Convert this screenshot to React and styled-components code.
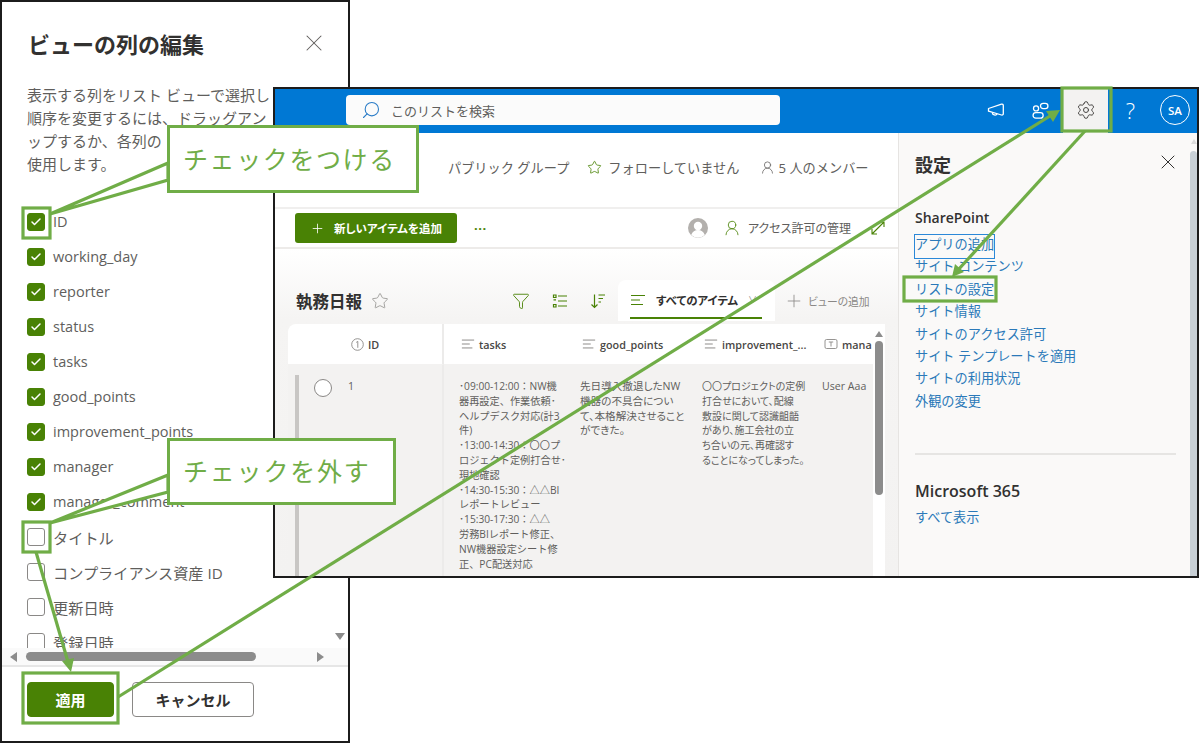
import React from "react";
import styled, { createGlobalStyle } from "styled-components";
import { Check, Funnel, Plus, Search, Settings, Star, UserRound, X } from "lucide-react";

const GREEN = "#70ad47";
const BRAND = "#498205";
const FONT = `"Open Sans", "Noto Sans CJK JP", sans-serif`;

const GlobalStyle = createGlobalStyle`
  html, body {
    margin: 0;
    padding: 0;
    background: #fff;
  }
  * {
    box-sizing: border-box;
  }
`;

const Stage = styled.div`
  position: relative;
  width: 1200px;
  height: 743px;
  overflow: hidden;
  background: #fff;
  font-family: ${FONT};
`;

/* left dialog */
const Dialog = styled.section`
  position: absolute;
  left: 0;
  top: 0;
  width: 350px;
  height: 743px;
  border: 2px solid #1c1c1c;
  background: #fff;
  display: flex;
  flex-direction: column;
  overflow: hidden;
`;
const DialogHead = styled.div`
  display: flex;
  align-items: center;
  justify-content: space-between;
  height: 30px;
  margin: 26px 20px 0 26px;
`;
const DialogTitle = styled.h1`
  margin: 0;
  font-size: 22px;
  font-weight: 700;
  color: #323130;
`;
const Desc = styled.div`
  margin: 26px 0 28px 25px;
  font-size: 15px;
  line-height: 23px;
  color: #605e5c;
  white-space: nowrap;
`;
const ColumnList = styled.div`
  flex: 1;
  min-height: 0;
  overflow: hidden;
  padding-left: 25px;
  position: relative;
`;
const ColumnRow = styled.div`
  display: flex;
  align-items: center;
  gap: 8px;
  height: 35px;
  font-size: ${(props) => (props.$cjk ? 15.2 : 14.5)}px;
  color: #605e5c;
`;
const CheckBox = styled.span`
  width: 18px;
  height: 18px;
  border-radius: 3px;
  display: flex;
  align-items: center;
  justify-content: center;
  flex: none;
  background: ${(props) => (props.$on ? BRAND : "#fff")};
  border: 1px solid ${(props) => (props.$on ? BRAND : "#8a8886")};
  color: #fff;
`;
const ScrollDown = styled.span`
  position: absolute;
  right: 3px;
  bottom: 8px;
  width: 0;
  height: 0;
  border-left: 5px solid transparent;
  border-right: 5px solid transparent;
  border-top: 7px solid #8c8c8c;
`;
const HScroll = styled.div`
  height: 17px;
  display: flex;
  align-items: center;
  padding: 0 24px 0 8px;
  background: #fafafa;
`;
const ArrowSide = styled.span`
  width: 0;
  height: 0;
  border-top: 5px solid transparent;
  border-bottom: 5px solid transparent;
  ${(props) =>
    props.$right
      ? `border-left: 7px solid #8c8c8c; margin-left: auto;`
      : `border-right: 7px solid #8c8c8c;`}
`;
const HThumb = styled.span`
  width: 230px;
  height: 9px;
  margin-left: 9px;
  border-radius: 5px;
  background: #8c8c8c;
`;
const DialogFoot = styled.div`
  height: 76px;
  border-top: 2px solid #e6e6e6;
  padding: 15px 0 0 25px;
  display: flex;
  align-items: flex-start;
  gap: 18px;
`;
const FootButton = styled.button`
  height: 35px;
  width: ${(props) => (props.$primary ? "87px" : "122px")};
  border-radius: 4px;
  font-family: ${FONT};
  font-size: 15px;
  font-weight: 700;
  padding: 0;
  background: ${(props) => (props.$primary ? BRAND : "#fff")};
  color: ${(props) => (props.$primary ? "#fff" : "#323130")};
  border: 1px solid ${(props) => (props.$primary ? BRAND : "#8a8886")};
`;

/* SharePoint window */
const ListWindow = styled.section`
  position: absolute;
  left: 273px;
  top: 87px;
  width: 926px;
  height: 491px;
  border: 2px solid #1c1c1c;
  background: #fff;
  display: flex;
  flex-direction: column;
  overflow: hidden;
`;
const SuiteBar = styled.header`
  flex: none;
  height: 44px;
  background: #0078d4;
  display: flex;
  align-items: center;
`;
const SearchBox = styled.div`
  width: 434px;
  height: 30px;
  margin: 0 0 2px 71px;
  border-radius: 4px;
  background: #fbfbfb;
  display: flex;
  align-items: center;
  gap: 10px;
  padding-left: 15px;
  font-size: 13px;
  color: #605e5c;
`;
const FlipSearch = styled(Search)`
  transform: scaleX(-1);
  color: #2a7cc7;
`;
const SuiteIcons = styled.div`
  margin-left: auto;
  display: flex;
  align-items: center;
`;
const SuiteButton = styled.div`
  width: ${(props) => (props.$narrow ? 44 : 45)}px;
  height: 44px;
  padding-bottom: 2px;
  display: flex;
  align-items: center;
  justify-content: center;
  color: ${(props) => (props.$active ? "#484644" : "#fff")};
  background: ${(props) => (props.$active ? "#f3f2f1" : "transparent")};
  font-size: 22px;
  font-weight: 300;
`;
const Avatar = styled.span`
  width: 30px;
  height: 30px;
  border: 1px solid #fff;
  border-radius: 50%;
  display: flex;
  align-items: center;
  justify-content: center;
  font-size: 11.5px;
  font-weight: 600;
  color: #fff;
`;
const WindowBody = styled.div`
  flex: 1;
  min-height: 0;
  display: flex;
`;
const Main = styled.div`
  width: 623px;
  flex: none;
  display: flex;
  flex-direction: column;
  overflow: hidden;
`;
const SiteBar = styled.div`
  flex: none;
  height: 75px;
  display: flex;
  align-items: center;
  padding: 0 0 0 173px;
  margin-top: -3px;
  font-size: 13.2px;
  color: #605e5c;
  white-space: nowrap;
`;
const SiteItem = styled.span`
  display: flex;
  align-items: center;
  gap: ${(props) => props.$gap || 5}px;
  margin-left: ${(props) => props.$left || 0}px;
`;
const GreenStar = styled(Star)`
  color: ${BRAND};
`;
const CommandBar = styled.div`
  flex: none;
  height: 42px;
  margin-top: 2px;
  border-top: 2px solid #f0efee;
  border-bottom: 2px solid #edebe9;
  display: flex;
  align-items: center;
  padding-left: 20px;
  white-space: nowrap;
`;
const NewButton = styled.div`
  width: 162px;
  height: 30px;
  border-radius: 3px;
  background: ${BRAND};
  color: #fff;
  display: flex;
  align-items: center;
  gap: 9px;
  padding-left: 15px;
  font-size: 11.5px;
  font-weight: 700;
  font-feature-settings: "palt";
`;
const MoreDots = styled.span`
  margin-left: 17px;
  color: ${BRAND};
  font-size: 13px;
  font-weight: 700;
  letter-spacing: 0.5px;
`;
const CommandRight = styled.div`
  margin-left: auto;
  display: flex;
  align-items: center;
  font-size: 12px;
  color: #605e5c;
`;
const ManageLabel = styled.span`
  display: flex;
  align-items: center;
  gap: 7px;
  margin: 0 19px 0 15px;
  color: #605e5c;
  font-feature-settings: "palt";
`;
const ShareIcon = styled.svg`
  width: 16px;
  height: 16px;
  margin-right: 12px;
  color: ${BRAND};
`;
const ListArea = styled.div`
  flex: 1;
  min-height: 0;
  background: linear-gradient(#ffffff, #f5f4f3 70px, #f3f2f1);
  padding-left: 13px;
  padding-right: 13px;
  display: flex;
  flex-direction: column;
`;
const ListHead = styled.div`
  flex: none;
  height: 41px;
  margin-top: 31px;
  display: flex;
  align-items: center;
  padding-left: 8px;
  white-space: nowrap;
`;
const ListTitle = styled.h2`
  margin: 0;
  font-size: 16.5px;
  font-weight: 700;
  color: #323130;
`;
const GrayStar = styled(Star)`
  color: #8a8886;
  margin-left: 9px;
`;
const ToolIcons = styled.div`
  margin-left: auto;
  display: flex;
  align-items: center;
  color: ${BRAND};
  gap: 22px;
  margin-right: 12px;
`;
const ViewTab = styled.div`
  position: relative;
  width: 157px;
  height: 41px;
  background: #fff;
  border-radius: 8px 8px 0 0;
  display: flex;
  align-items: center;
  gap: 10px;
  padding: 0 0 2px 12px;
  font-size: 11.4px;
  font-weight: 700;
  color: #323130;
  font-feature-settings: "palt";
  &::after {
    content: "";
    position: absolute;
    left: 12px;
    bottom: 2px;
    width: 132px;
    height: 2px;
    background: ${BRAND};
  }
`;
const TabChevron = styled.span`
  color: #8a8886;
  font-size: 9px;
  font-weight: 400;
`;
const AddView = styled.div`
  display: flex;
  align-items: center;
  gap: 4px;
  width: 110px;
  padding-left: 9px;
  font-size: 10.8px;
  color: #8a8886;
  font-feature-settings: "palt";
`;
const TableWrap = styled.div`
  flex: 1;
  min-height: 0;
  margin-top: 3px;
  display: flex;
`;
const Table = styled.div`
  width: 585px;
  flex: none;
  display: grid;
  grid-template-columns: 156px 121px 122px 120px 66px;
  grid-template-rows: 41px 1fr;
  border-radius: 8px 0 0 0;
  overflow: hidden;
`;
const HeadCell = styled.div`
  background: #fff;
  display: flex;
  align-items: center;
  justify-content: ${(props) => (props.$center ? "center" : "flex-start")};
  gap: 4px;
  padding-left: ${(props) => (props.$center ? 0 : 17)}px;
  font-size: 10.8px;
  font-weight: 600;
  color: #484644;
  white-space: nowrap;
  overflow: hidden;
  border-right: ${(props) => (props.$divide ? "2px solid #ecebea" : "none")};
  border-bottom: 1px solid #f3f2f1;
  svg {
    flex: none;
  }
`;
const TextCell = styled.div`
  background: #f3f2f1;
  padding: 14px 0 0 15px;
  font-size: ${(props) => props.$size || 10.6}px;
  line-height: 14.8px;
  color: #605e5c;
  white-space: nowrap;
  overflow: hidden;
  font-feature-settings: ${(props) => (props.$plain ? "normal" : `"palt"`)};
`;
const IdCell = styled.div`
  background: #f3f2f1;
  border-right: 2px solid #ecebea;
  display: flex;
  align-items: flex-start;
  padding: 10px 0 0 7px;
  font-size: 10.6px;
  color: #605e5c;
`;
const RowBar = styled.span`
  width: 4px;
  height: 100%;
  background: #c8c6c4;
  flex: none;
`;
const Radio = styled.span`
  width: 18px;
  height: 18px;
  margin: 4px 0 0 15px;
  border: 1px solid #8a8886;
  border-radius: 50%;
  background: #fff;
  flex: none;
`;
const RowNumber = styled.span`
  margin: 4px 0 0 16px;
`;
const VScroll = styled.div`
  flex: 1;
  background: #fff;
  padding: 7px 2px 0 1px;
  display: flex;
  flex-direction: column;
  align-items: center;
  gap: 4px;
`;
const ArrowUp = styled.span`
  width: 0;
  height: 0;
  border-left: 4px solid transparent;
  border-right: 4px solid transparent;
  border-bottom: 6px solid #8c8c8c;
`;
const VThumb = styled.span`
  width: 8px;
  height: 154px;
  border-radius: 4px;
  background: #8c8c8c;
`;

/* settings side panel */
const SettingsPanel = styled.aside`
  flex: 1;
  position: relative;
  background: #faf9f8;
  border-left: 1px solid #e6e4e2;
  padding: 0 21px 0 16px;
  display: flex;
  flex-direction: column;
`;
const SettingsHead = styled.div`
  height: 24px;
  margin-top: 19px;
  display: flex;
  align-items: center;
  justify-content: space-between;
`;
const SettingsTitle = styled.h2`
  margin: 0;
  font-size: 18px;
  font-weight: 700;
  color: #323130;
`;
const PanelClose = styled(X)`
  margin-right: -4px;
  margin-top: -4px;
  color: #323130;
`;
const GroupName = styled.div`
  margin-top: ${(props) => props.$top || 0}px;
  font-size: ${(props) => (props.$large ? 16 : 14)}px;
  font-weight: 600;
  color: #323130;
  line-height: 20px;
`;
const LinkList = styled.div`
  margin-top: 5px;
  display: flex;
  flex-direction: column;
`;
const PanelLink = styled.a`
  position: relative;
  height: 22.4px;
  line-height: 22.4px;
  font-size: 13.2px;
  color: #2b79b9;
  white-space: nowrap;
  ${(props) =>
    props.$focus &&
    `
      &::after {
        content: "";
        position: absolute;
        left: -1px;
        top: 1px;
        width: 79px;
        height: 23px;
        border: 1px solid #2b88d8;
      }
    `}
`;
const PanelRule = styled.div`
  height: 2px;
  background: #e6e5e3;
  margin: 41px 0 26px;
`;
const PanelScroll = styled.div`
  position: absolute;
  right: 0;
  top: 18px;
  bottom: 0;
  width: 7px;
  border-radius: 4px 4px 0 0;
  background: #c8d0d6;
`;
const PanelArrow = styled.span`
  position: absolute;
  right: 0;
  top: 6px;
  width: 0;
  height: 0;
  border-left: 3.5px solid transparent;
  border-right: 3.5px solid transparent;
  border-bottom: 5px solid #dcdcdc;
`;

/* annotations over the screenshots */
const Overlay = styled.svg`
  position: absolute;
  left: 0;
  top: 0;
  width: 1200px;
  height: 743px;
  pointer-events: none;
`;
const Callout = styled.div`
  position: absolute;
  left: 167px;
  top: ${(props) => props.$top}px;
  width: ${(props) => props.$width}px;
  height: ${(props) => props.$height}px;
  border: 3px solid ${GREEN};
  background: #fff;
  color: ${GREEN};
  display: flex;
  align-items: center;
  padding: 0 0 3px 13px;
  font-size: 25px;
  letter-spacing: ${(props) => props.$spacing}px;
  white-space: nowrap;
`;

const checkedColumns = [
  "ID",
  "working_day",
  "reporter",
  "status",
  "tasks",
  "good_points",
  "improvement_points",
  "manager",
  "manager_comment",
];
const plainColumns = ["タイトル", "コンプライアンス資産 ID", "更新日時", "登録日時"];

const taskLines = [
  "･09:00-12:00：NW機",
  "器再設定、作業依頼･",
  "ヘルプデスク対応(計3",
  "件)",
  "･13:00-14:30：〇〇プ",
  "ロジェクト定例打合せ･",
  "現地確認",
  "･14:30-15:30：△△BI",
  "レポートレビュー",
  "･15:30-17:30：△△",
  "労務BIレポート修正、",
  "NW機器設定シート修",
  "正、PC配送対応",
];
const goodLines = [
  "先日導入撤退したNW",
  "機器の不具合につい",
  "て、本格解決させること",
  "ができた。",
];
const improveLines = [
  "〇〇プロジェクトの定例",
  "打合せにおいて、配線",
  "敷設に関して認識齟齬",
  "があり、施工会社の立",
  "ち合いの元、再確認す",
  "ることになってしまった。",
];
const links = [
  "アプリの追加",
  "サイト コンテンツ",
  "リストの設定",
  "サイト情報",
  "サイトのアクセス許可",
  "サイト テンプレートを適用",
  "サイトの利用状況",
  "外観の変更",
];

function LinesIcon({ color = "#8a8886", size = 14 }) {
  return (
    <svg width={size} height={size} viewBox="0 0 16 16" fill="none" stroke={color} strokeWidth="1.1">
      <path d="M1 3.5h14M1 8h9M1 12.5h12" />
    </svg>
  );
}

function HornIcon() {
  return (
    <svg width="18" height="18" viewBox="0 0 18 18" fill="none" stroke="#fff" strokeWidth="1.3" strokeLinejoin="round">
      <path d="M1.5 7.5 14.5 3.2c1-.3 1.8.3 1.8 1.3v8.2c0 1-.8 1.6-1.8 1.3L1.5 10.2z" />
      <path d="M5.5 11.6c-.4 2.4 3.6 3.4 4.6 1.2" />
    </svg>
  );
}

function ChatIcon() {
  return (
    <svg width="17" height="17" viewBox="0 0 16 16" fill="none" stroke="#fff" strokeWidth="1.2">
      <rect x="8" y="1.2" width="7" height="5" rx="2.5" />
      <circle cx="3.8" cy="6" r="2.4" />
      <rect x="1" y="10" width="9.5" height="5.2" rx="2.6" />
    </svg>
  );
}

function TaskListIcon() {
  return (
    <svg width="16" height="16" viewBox="0 0 16 16" fill="none" stroke="currentColor" strokeWidth="1.2">
      <path d="M6 3h9M6 8h9M6 13h9" />
      <path d="M1.5 2h2.5v2.5H1.5zM1.5 11.5h2.5V14H1.5zM1.5 6.8h2.5" />
    </svg>
  );
}

function SortIcon() {
  return (
    <svg width="16" height="16" viewBox="0 0 16 16" fill="none" stroke="currentColor" strokeWidth="1.2">
      <path d="M4.5 1.5v13M1.5 11.5l3 3 3-3M8.5 2h6.5M8.5 5.5h4.5M8.5 9h2.5" />
    </svg>
  );
}

function NumberIcon() {
  return (
    <svg width="13" height="13" viewBox="0 0 13 13" fill="none" stroke="#8a8886" strokeWidth="0.9">
      <circle cx="6.5" cy="6.5" r="5.8" />
      <path d="M5.2 4.4 6.8 3.4V9.8" />
    </svg>
  );
}

function TextFieldIcon() {
  return (
    <svg width="14" height="14" viewBox="0 0 14 14" fill="none" stroke="#8a8886" strokeWidth="0.9">
      <rect x="1" y="2.5" width="12" height="9" rx="1.5" />
      <path d="M4.8 5h4.4M7 5v4.5" />
    </svg>
  );
}

function UserPhoto() {
  return (
    <svg width="20" height="20" viewBox="0 0 20 20">
      <circle cx="10" cy="10" r="10" fill="#b3b0ad" />
      <circle cx="10" cy="8" r="4.2" fill="#fff" />
      <path d="M3.2 17c1.2-3.6 3.8-5 6.8-5s5.6 1.4 6.8 5a10 10 0 0 1-13.6 0z" fill="#fff" />
    </svg>
  );
}

function Lines({ lines }) {
  return lines.map((line) => <div key={line}>{line}</div>);
}

export default function App() {
  return (
    <Stage>
      <GlobalStyle />

      <Dialog>
        <DialogHead>
          <DialogTitle>ビューの列の編集</DialogTitle>
          <X size={28} strokeWidth={0.9} color="#605e5c" />
        </DialogHead>
        <Desc>
          <div>表示する列をリスト ビューで選択し</div>
          <div>順序を変更するには、ドラッグアン</div>
          <div>ップするか、各列の</div>
          <div>使用します。</div>
        </Desc>
        <ColumnList>
          {checkedColumns.map((name) => (
            <ColumnRow key={name}>
              <CheckBox $on>
                <Check size={12} strokeWidth={3} />
              </CheckBox>
              {name}
            </ColumnRow>
          ))}
          {plainColumns.map((name) => (
            <ColumnRow key={name} $cjk>
              <CheckBox />
              {name}
            </ColumnRow>
          ))}
          <ScrollDown />
        </ColumnList>
        <HScroll>
          <ArrowSide />
          <HThumb />
          <ArrowSide $right />
        </HScroll>
        <DialogFoot>
          <FootButton $primary>適用</FootButton>
          <FootButton>キャンセル</FootButton>
        </DialogFoot>
      </Dialog>

      <ListWindow>
        <SuiteBar>
          <SearchBox>
            <FlipSearch size={20} strokeWidth={1.3} />
            このリストを検索
          </SearchBox>
          <SuiteIcons>
            <SuiteButton>
              <HornIcon />
            </SuiteButton>
            <SuiteButton>
              <ChatIcon />
            </SuiteButton>
            <SuiteButton $active>
              <Settings size={20} strokeWidth={1.2} />
            </SuiteButton>
            <SuiteButton>?</SuiteButton>
            <SuiteButton $narrow>
              <Avatar>SA</Avatar>
            </SuiteButton>
          </SuiteIcons>
        </SuiteBar>

        <WindowBody>
          <Main>
            <SiteBar>
              <SiteItem>パブリック グループ</SiteItem>
              <SiteItem $left={18} $gap={6}>
                <GreenStar size={15} strokeWidth={1.3} />
                フォローしていません
              </SiteItem>
              <SiteItem $left={21} $gap={3}>
                <UserRound size={15} strokeWidth={1.2} />5 人のメンバー
              </SiteItem>
            </SiteBar>
            <CommandBar>
              <NewButton>
                <Plus size={15} strokeWidth={1.3} />
                新しいアイテムを追加
              </NewButton>
              <MoreDots>···</MoreDots>
              <CommandRight>
                <UserPhoto />
                <ManageLabel>
                  <UserRound size={18} strokeWidth={1.1} color={BRAND} />
                  アクセス許可の管理
                </ManageLabel>
                <ShareIcon viewBox="0 0 16 16" fill="none" stroke="currentColor" strokeWidth="1.1">
                  <path d="M2 14 14 2M9 2h5v5M2 9v5h5" />
                </ShareIcon>
              </CommandRight>
            </CommandBar>
            <ListArea>
              <ListHead>
                <ListTitle>執務日報</ListTitle>
                <GrayStar size={18} strokeWidth={1} />
                <ToolIcons>
                  <Funnel size={18} strokeWidth={1.2} />
                  <TaskListIcon />
                  <SortIcon />
                </ToolIcons>
                <ViewTab>
                  <LinesIcon color={BRAND} size={16} />
                  すべてのアイテム
                  <TabChevron>∨</TabChevron>
                </ViewTab>
                <AddView>
                  <Plus size={20} strokeWidth={1} />
                  ビューの追加
                </AddView>
              </ListHead>
              <TableWrap>
                <Table>
                  <HeadCell $center $divide>
                    <NumberIcon />
                    ID
                  </HeadCell>
                  <HeadCell>
                    <LinesIcon />
                    tasks
                  </HeadCell>
                  <HeadCell>
                    <LinesIcon />
                    good_points
                  </HeadCell>
                  <HeadCell>
                    <LinesIcon />
                    improvement_...
                  </HeadCell>
                  <HeadCell>
                    <TextFieldIcon />
                    mana
                  </HeadCell>
                  <IdCell>
                    <RowBar />
                    <Radio />
                    <RowNumber>1</RowNumber>
                  </IdCell>
                  <TextCell $plain $size={10.2}>
                    <Lines lines={taskLines} />
                  </TextCell>
                  <TextCell>
                    <Lines lines={goodLines} />
                  </TextCell>
                  <TextCell $size={10}>
                    <Lines lines={improveLines} />
                  </TextCell>
                  <TextCell>User Aaa</TextCell>
                </Table>
                <VScroll>
                  <ArrowUp />
                  <VThumb />
                </VScroll>
              </TableWrap>
            </ListArea>
          </Main>

          <SettingsPanel>
            <SettingsHead>
              <SettingsTitle>設定</SettingsTitle>
              <PanelClose size={24} strokeWidth={1} />
            </SettingsHead>
            <GroupName $top={32}>SharePoint</GroupName>
            <LinkList>
              {links.map((link, i) => (
                <PanelLink key={link} $focus={i === 0}>
                  {link}
                </PanelLink>
              ))}
            </LinkList>
            <PanelRule />
            <GroupName $large>Microsoft 365</GroupName>
            <LinkList>
              <PanelLink>すべて表示</PanelLink>
            </LinkList>
            <PanelArrow />
            <PanelScroll />
          </SettingsPanel>
        </WindowBody>
      </ListWindow>

      <Overlay viewBox="0 0 1200 743" fill="none" stroke={GREEN} strokeWidth="3.2">
        <polygon points="168,163 50,214 168,180" fill="#fff" />
        <polygon points="168,475 50,523 168,492" fill="#fff" />
        <rect x="23" y="208" width="27" height="30" fill="none" />
        <rect x="23" y="522" width="27" height="30" fill="none" />
        <rect x="23" y="673" width="95" height="50" fill="none" />
        <rect x="1062" y="88" width="49" height="43" fill="none" />
        <rect x="904" y="277" width="92" height="24" fill="none" />
        <path d="M36 552 68 662" />
        <polygon points="71,672 62,661 74,658" fill={GREEN} stroke="none" />
        <path d="M118 697 1050 116" />
        <polygon points="1060,110 1053,122 1046,111" fill={GREEN} stroke="none" />
        <path d="M1085 131 958 270" />
        <polygon points="952,277 955,264 964,272" fill={GREEN} stroke="none" />
      </Overlay>

      <Callout $top={125} $width={252} $height={68} $spacing={1.6}>
        チェックをつける
      </Callout>
      <Callout $top={438} $width={229} $height={67} $spacing={1.8}>
        チェックを外す
      </Callout>
    </Stage>
  );
}
